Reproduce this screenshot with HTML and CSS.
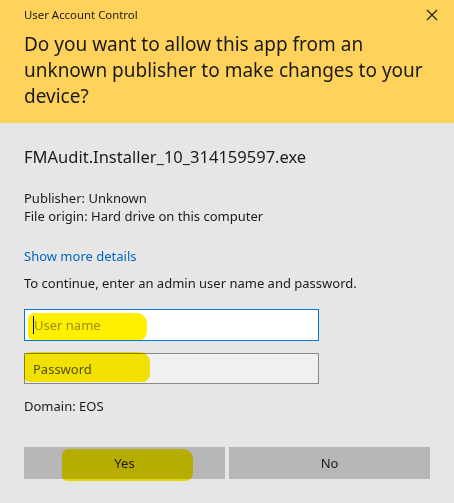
FILE: index.html
```html
<!DOCTYPE html>
<html>
<head>
<meta charset="utf-8">
<link rel="stylesheet" href="styles.css">
</head>
<body>
<div class="dialog">
  <div class="header">
    <div class="titlebar">
      <span class="title">User Account Control</span>
      <svg class="close" width="12" height="12" viewBox="0 0 12 12"><path d="M1 1 L11 11 M11 1 L1 11" stroke="#1a1a1a" stroke-width="1.1" fill="none"/></svg>
    </div>
    <div class="question">Do you want to allow this app from an unknown publisher to make changes to your device?</div>
  </div>
  <div class="content">
    <div class="filename">FMAudit.Installer_10_314159597.exe</div>
    <div class="info">
      <div>Publisher: Unknown</div>
      <div>File origin: Hard drive on this computer</div>
    </div>
    <div class="more">Show more details</div>
    <div class="prompt">To continue, enter an admin user name and password.</div>
    <div class="field field-focus"><span class="caret"></span><span class="ph ph-light">User name</span></div>
    <div class="field field-idle"><span class="ph ph-dark">Password</span></div>
    <div class="domain">Domain: EOS</div>
    <div class="buttons">
      <div class="btn">Yes</div>
      <div class="btn">No</div>
    </div>
  </div>
  <div class="hl hl1"></div>
  <div class="hl hl2"></div>
  <div class="hl hl3"></div>
</div>
</body>
</html>
```
FILE: styles.css
```css
html, body { margin: 0; padding: 0; }
body { background: #e6e6e6; }
.dialog {
  position: relative;
  width: 454px;
  height: 503px;
  background: #e6e6e6;
  font-family: "Noto Sans", "Open Sans", sans-serif;
  color: #1b1b1b;
  overflow: hidden;
}
.header {
  background: #ffd25b;
  height: 123px;
  padding: 0 17px 0 24px;
  box-sizing: border-box;
}
.titlebar {
  display: flex;
  justify-content: space-between;
  align-items: center;
  height: 30px;
}
.title { font-size: 11.4px; line-height: 16px; margin-top: -1px; }
.close { margin-right: -1px; }
.question {
  font-size: 19px;
  line-height: 26px;
  margin-top: 1px;
}
.content { padding: 0 24px; }
.filename { font-size: 16.5px; line-height: 22px; margin-top: 23px; }
.info { font-size: 13px; line-height: 18px; margin-top: 21px; }
.more { font-size: 13px; line-height: 18px; color: #0067c0; margin-top: 22px; }
.prompt { font-size: 13px; line-height: 18px; margin-top: 9px; }
.field {
  width: 295px;
  height: 32px;
  box-sizing: border-box;
  border: 1px solid #888;
  display: flex;
  align-items: center;
  padding-left: 8px;
  font-size: 13px;
}
.field-focus { border-color: #0078d7; background: #fff; margin-top: 17px; }
.field-idle { background: #f0f0f0; margin-top: 12px; height: 31px; }
.caret { width: 1px; height: 18px; background: #000; }
.ph-light { color: #9a9a9a; }
.ph-dark { color: #555; }
.domain { font-size: 13px; line-height: 18px; margin-top: 13px; }
.buttons { display: flex; gap: 4px; margin-top: 32px; }
.btn {
  flex: 1;
  height: 32px;
  background: #b7b7b7;
  display: flex;
  align-items: center;
  justify-content: center;
  font-size: 13px;
}
.hl {
  position: absolute;
  background: #fff000;
  mix-blend-mode: multiply;
  border-radius: 6px 10px 8px 5px;
}
.hl1 { left: 28px; top: 313px; width: 119px; height: 27px; }
.hl2 { left: 24px; top: 352px; width: 126px; height: 30px; }
.hl3 { left: 62px; top: 449px; width: 131px; height: 32px; }
```
